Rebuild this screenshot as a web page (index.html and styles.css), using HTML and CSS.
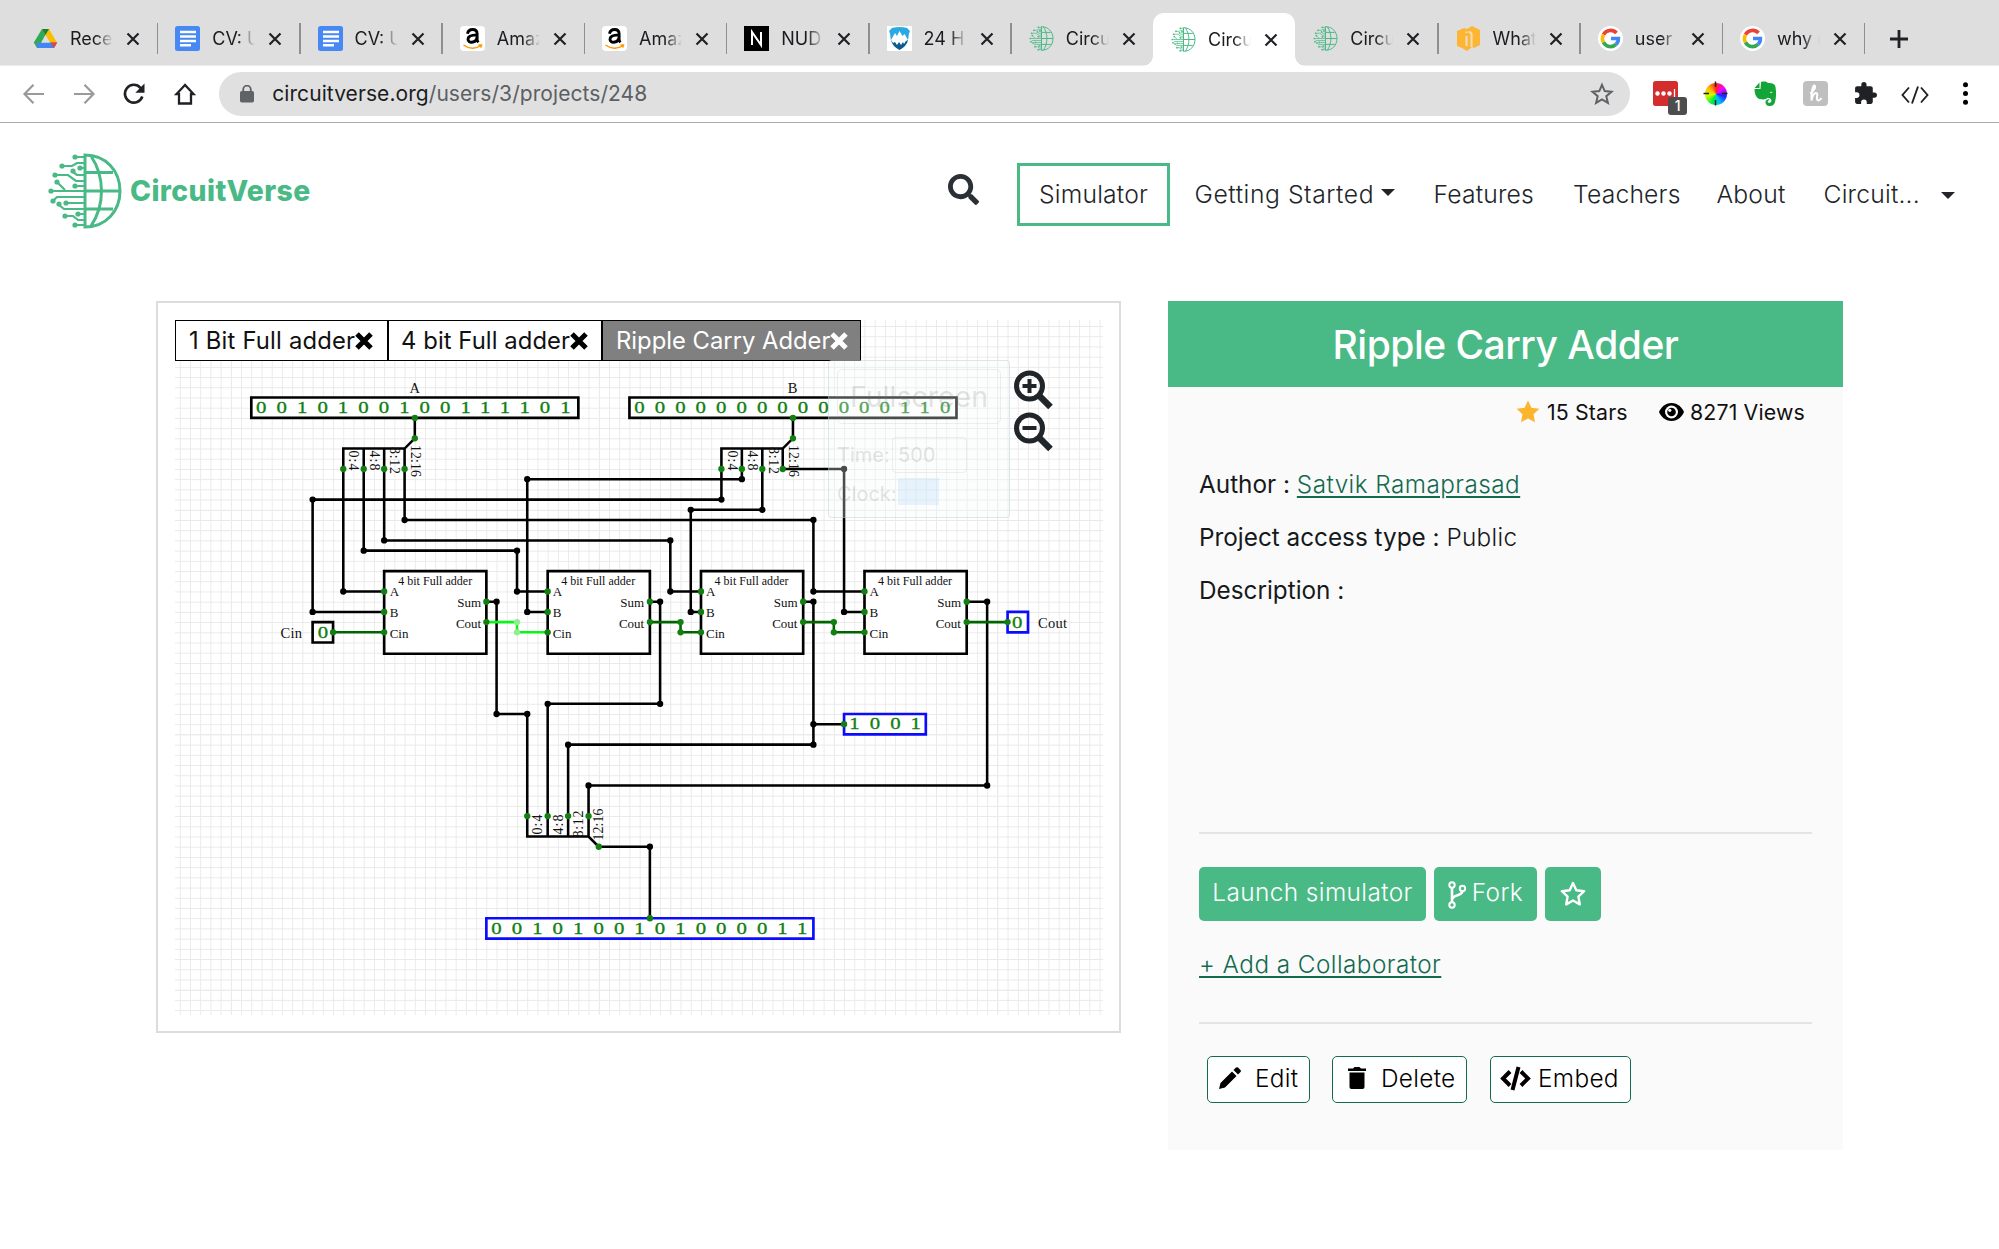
FILE: index.html
```html
<!DOCTYPE html>
<html lang="en">
<head>
<meta charset="utf-8">
<title>Ripple Carry Adder</title>
<link rel="stylesheet" href="styles.css">
</head>
<body>
<svg class="defs" width="0" height="0" aria-hidden="true">
  <defs>
    <symbol id="globe" viewBox="0 0 74 76">
      <g fill="none" stroke="#49b985" stroke-width="3">
        <path d="M37 2C58 2 72 18 72 38S58 74 37 74ZM43 3C57 24 57 52 43 73M38 19.500H65M37 38H72M38 56H65"/>
        <g stroke-width="2.200">
          <path d="M27 4H37M14 13H24L29 10H37M32 15H37M25 19 29 22H37M7 22H20L28 28H37M27 33H37M9 29 17 37M3 38H37M5 48 9 44H37M18 50H37M11 52 16 56H37M17 63H25L30 67H37M31 61H37M27 72H37"/>
        </g>
      </g>
      <g fill="#49b985"><circle cx="27" cy="4" r="2.600"/><circle cx="14" cy="13" r="2.600"/><circle cx="32" cy="15" r="2.600"/><circle cx="25" cy="18" r="2.600"/><circle cx="7" cy="22" r="2.600"/><circle cx="9" cy="29" r="2.600"/><circle cx="27" cy="33" r="2.600"/><circle cx="3" cy="38" r="2.600"/><circle cx="5" cy="48" r="2.600"/><circle cx="18" cy="50" r="2.600"/><circle cx="11" cy="51" r="2.600"/><circle cx="17" cy="63" r="2.600"/><circle cx="30" cy="61" r="2.600"/><circle cx="27" cy="72" r="2.600"/></g>
    </symbol>
    <symbol id="doc" viewBox="0 0 25 25"><rect width="25" height="25" rx="2.500" fill="#4688f4"/><path d="M5 6h16M5 10.500h16M5 15h16M5 19.300h11" stroke="#fff" stroke-width="2.400"/></symbol>
    <symbol id="amazon" viewBox="0 0 25 25"><rect width="25" height="25" rx="4" fill="#fff"/><path d="M7.500 7.800C8 4.800 10 3.500 12.600 3.500c3 0 4.500 1.600 4.500 4.300v5.400c0 1.500.4 2.200 1.300 3.200M17 8.900c-5.500.1-9 1-9 4.300 0 4.400 7.200 4.200 9-1" fill="none" stroke="#000" stroke-width="2.900"/><path d="M3.500 19c5.500 4 12 4.200 17.500.5M18.500 19h3l-.8 2.600" fill="none" stroke="#f90" stroke-width="1.500"/></symbol>
    <symbol id="google" viewBox="0 0 25 25"><circle cx="12.500" cy="12.500" r="12.500" fill="#fff"/><g fill="none" stroke-width="3.600"><path d="M18.500 7A8 8 0 0 0 5.500 8.600" stroke="#ea4335"/><path d="M5.500 8.600a8 8 0 0 0 0 7.800" stroke="#fbbc05"/><path d="M5.500 16.400a8 8 0 0 0 12.500 2" stroke="#34a853"/><path d="M13 12.500h7.400a8 8 0 0 1-2.400 5.900" stroke="#4285f4"/></g></symbol>
    <symbol id="x" viewBox="0 0 14 14"><path d="M1.500 1.500l11 11M12.500 1.500l-11 11" stroke="#202124" stroke-width="2.200"/></symbol>
  </defs>
</svg>

<div class="tabstrip">
  <div class="tab"><svg class="fav" viewBox="0 0 25 25"><path d="M9 3h7l-8.500 15L4 22 0.800 16.500z" fill="#31a853"/><path d="M9 3h7l8.200 14h-7z" fill="#fbbc04"/><path d="M4.500 16.500h19.700L21 22H4z" fill="#4285f4"/><path d="M17.500 16.500h6.700L21 22z" fill="#ea4335"/><path d="M12.500 9l4.200 7.500H8.300z" fill="#dedede"/><path d="M9 3h7l-3.500 6z" fill="#188038"/></svg><span class="tt">Rece</span><svg class="cx"><use href="#x"/></svg></div>
  <div class="tab"><svg class="fav"><use href="#doc"/></svg><span class="tt">CV: U</span><svg class="cx"><use href="#x"/></svg></div>
  <div class="tab"><svg class="fav"><use href="#doc"/></svg><span class="tt">CV: U</span><svg class="cx"><use href="#x"/></svg></div>
  <div class="tab"><svg class="fav"><use href="#amazon"/></svg><span class="tt">Amaz</span><svg class="cx"><use href="#x"/></svg></div>
  <div class="tab"><svg class="fav"><use href="#amazon"/></svg><span class="tt">Amaz</span><svg class="cx"><use href="#x"/></svg></div>
  <div class="tab"><svg class="fav" viewBox="0 0 25 25"><rect width="25" height="25"/><path d="M8 19V6l9 13V6" fill="none" stroke="#fff" stroke-width="2"/></svg><span class="tt">NUD</span><svg class="cx"><use href="#x"/></svg></div>
  <div class="tab"><svg class="fav" viewBox="0 0 25 25"><rect width="25" height="25" fill="#fff"/><path d="M5 2q7.500-2 15 0l3 3c-2 4-1 6-2 9H4c-1-3 0-5-2-9z" fill="#29aae2"/><path d="M4 14q1 6 8.500 10Q20 20 21 14z" fill="#0e5a92"/><path d="M4 14l4-7 2 3 2.500-5 3 5 2-2 3.500 6-2 1-2 3-1-2-2 3-2-3-2 3-2-3-2 1z" fill="#fff"/></svg><span class="tt">24 H</span><svg class="cx"><use href="#x"/></svg></div>
  <div class="tab nosep"><svg class="fav"><use href="#globe"/></svg><span class="tt">Circu</span><svg class="cx"><use href="#x"/></svg></div>
  <div class="tab active nosep"><svg class="fav"><use href="#globe"/></svg><span class="tt">Circu</span><svg class="cx"><use href="#x"/></svg></div>
  <div class="tab"><svg class="fav"><use href="#globe"/></svg><span class="tt">Circu</span><svg class="cx"><use href="#x"/></svg></div>
  <div class="tab"><svg class="fav" viewBox="0 0 25 25"><path d="M1 5l7-3 3 1 5-3 8 4v15l-6 3-2-1-5 4-5-3-5-2z" fill="#fdb633"/><path d="M10.500 10v10M15.500 21V8.500q0-2.500-3-2.500M10.500 5.500v1.500" fill="none" stroke="#f0dcb4" stroke-width="2.200"/></svg><span class="tt">What</span><svg class="cx"><use href="#x"/></svg></div>
  <div class="tab"><svg class="fav"><use href="#google"/></svg><span class="tt">user</span><svg class="cx"><use href="#x"/></svg></div>
  <div class="tab"><svg class="fav"><use href="#google"/></svg><span class="tt">why r</span><svg class="cx"><use href="#x"/></svg></div>
  <svg class="plus" viewBox="0 0 20 20"><path d="M10 1v18M1 10h18" stroke="#202124" stroke-width="2.800"/></svg>
</div>

<div class="toolbar">
  <svg class="tb back" viewBox="0 0 24 24"><path d="M22 12H3M11.500 2.800L2.500 12l9 9.200" fill="none" stroke="#9a9a9a" stroke-width="2.200"/></svg>
  <svg class="tb" viewBox="0 0 24 24"><path d="M2 12h19M12.500 2.800l9 9.200-9 9.200" fill="none" stroke="#9a9a9a" stroke-width="2.200"/></svg>
  <svg class="tb" viewBox="0 0 24 24"><path d="M20.300 14.500A8.900 8.900 0 1 1 18.500 5.800L20 7.500" fill="none" stroke="#202124" stroke-width="2.600"/><path d="M22.500 1.500v9.200h-9.200z" fill="#202124"/></svg>
  <svg class="tb" viewBox="0 0 24 24"><path d="M12 3L3.500 12H6v9.500h12V12h2.500z" fill="none" stroke="#202124" stroke-width="2.300"/></svg>
  <div class="omnibox">
    <svg class="lock" viewBox="0 0 14 18"><rect y="6" width="14" height="11.500" rx="1.800" fill="#5f6368"/><path d="M3.200 7V4.500a3.800 3.800 0 0 1 7.600 0V7" fill="none" stroke="#5f6368" stroke-width="1.800"/></svg>
    <span class="url">circuitverse.org<span class="path">/users/3/projects/248</span></span>
    <svg class="bstar" viewBox="0 0 24 24"><path d="M12 2.800l2.700 6.300 6.800.6-5.200 4.500 1.600 6.700-5.900-3.600-5.900 3.600 1.600-6.700L2.500 9.700l6.800-.6z" fill="none" stroke="#5f6368" stroke-width="2"/></svg>
  </div>
  <div class="exts">
    <span class="ext red"><svg viewBox="0 0 25 25"><rect width="25" height="25" rx="2.500" fill="#d32d2e"/><circle cx="4.500" cy="12.500" r="2.200" fill="#fff"/><circle cx="10.500" cy="12.500" r="2.200" fill="#fff"/><circle cx="16.500" cy="12.500" r="2.200" fill="#fff"/><path d="M21.500 8v8" stroke="#fff" stroke-width="1.300"/></svg><b class="badge">1</b></span>
    <span class="ext"><i class="wheel"></i><svg class="cross" viewBox="0 0 25 25"><path d="M12.500 .5v5.500M12.500 19v5.500M.5 12.500H6M19 12.500h5.500" stroke="#222" stroke-width="1.500"/></svg></span>
    <span class="ext"><svg viewBox="0 0 25 25"><path d="M8 1c4-1 6 0 7 1 5 0 7 1 7.500 4 1 6 .7 11-.5 15-1 3.500-3 4-5.500 4-3 0-4-2-4-4s2-3 4-2.600c-.5 1.500-1.700.6-1.800 2.400 0 1.500 3.700 1.500 3.700-1 0-2-2-3-4-3-1 2-5 2-8 1.200C3 17 1.500 12 1.500 8H7.500z" fill="#14a538"/><path d="M1.500 7L6.500 1.500V7z" fill="#14a538"/><path d="M16.500 11.500q2-1.500 3 .5z" fill="#fff"/></svg></span>
    <span class="ext"><svg viewBox="0 0 25 25"><rect width="25" height="25" rx="4" fill="#bfbfbf"/><path d="M7 12c5-2 6-7 4.500-7.500S8 11 8.500 19.500c1-5 3-7.500 4.500-7.500 2.500 0 .5 3.500 1 6s3 1.500 4.500-1" fill="none" stroke="#fff" stroke-width="2"/></svg></span>
    <span class="ext"><svg viewBox="0 0 24 24"><path d="M20.500 11H19V7c0-1.100-.9-2-2-2h-4V3.500a2.500 2.500 0 0 0-5 0V5H4c-1.100 0-2 .9-2 2v3.800h1.500a2.700 2.700 0 0 1 0 5.400H2V20c0 1.100.9 2 2 2h3.800v-1.500a2.700 2.700 0 0 1 5.400 0V22H17c1.100 0 2-.9 2-2v-4h1.500a2.500 2.500 0 0 0 0-5z" fill="#202124"/></svg></span>
    <span class="ext"><svg class="code" viewBox="0 0 28 20"><path d="M8 2.500L1.500 10 8 17.500M20 2.500l6.500 7.500L20 17.500M17 1.500l-6 17" fill="none" stroke="#202124" stroke-width="1.900"/></svg></span>
    <span class="ext"><svg viewBox="0 0 24 24"><circle cx="12" cy="3.500" r="2.400"/><circle cx="12" cy="12" r="2.400"/><circle cx="12" cy="20.500" r="2.400"/></svg></span>
  </div>
</div>

<header class="header">
  <div class="logo"><svg class="mark"><use href="#globe"/></svg><span class="brand">CircuitVerse</span></div>
  <svg class="search" viewBox="0 0 512 512"><path fill="#2b3037" d="M505 442.700L405.300 343c-4.500-4.500-10.600-7-17-7H372c27.600-35.300 44-79.700 44-128C416 93.100 322.900 0 208 0S0 93.100 0 208s93.100 208 208 208c48.300 0 92.700-16.400 128-44v16.300c0 6.400 2.500 12.500 7 17l99.700 99.700c9.400 9.400 24.600 9.400 33.900 0l28.300-28.300c9.400-9.400 9.400-24.600.1-34zM208 336c-70.700 0-128-57.200-128-128 0-70.700 57.200-128 128-128 70.700 0 128 57.200 128 128 0 70.700-57.200 128-128 128z"/></svg>
  <nav class="nav">
    <a class="sim">Simulator</a>
    <a class="started">Getting Started<i class="caret"></i></a>
    <a class="features">Features</a>
    <a class="teachers">Teachers</a>
    <a class="about">About</a>
    <a class="user">Circuit...<i class="caret low"></i></a>
  </nav>
</header>

<main class="main">
  <section class="viewer">
    <svg class="canvas" viewBox="175 320 928 695">
      <defs>
        <pattern id="minor" x="251.300" y="397.500" width="10.220" height="10.210" patternUnits="userSpaceOnUse"><path d="M0 0H10.220M0 0V10.210" stroke="#e9e9e9" stroke-width="1.700"/></pattern>
      </defs>
      <rect x="175" y="320" width="928" height="695" fill="url(#minor)"/>
      <path d="M231.500 320V1014M466.500 320V1014M599.500 320V1014M670.500 320V1014M834.500 320V1014M997.500 320V1014M175 510.500H1103M175 530.500H1103M175 734.500H1103M175 857.500H1103M175 990.500H1103" stroke="#ebebeb" fill="none"/>

      <g transform="translate(251.300 397.500) scale(10.220 10.210)" fill="none" stroke="#000" stroke-width=".25">
        <g fill="#fff" stroke-width=".26">
          <path d="M0 0H32V2H0ZM37 0H69V2H37ZM6 22H8V24H6Z"/>
          <path d="M74 21H76V23H74ZM58 31H66V33H58ZM23 51H55V53H23Z" stroke="#0b0bff"/>
          <path d="M13 17H23V25.100H13ZM29 17H39V25.100H29ZM44 17H54V25.100H44ZM60 17H70V25.100H60Z"/>
        </g>
        <path d="M16 2V4L15 5H9V7M11 5V7M13 5V7M15 5V7M53 2V4L52 5H46V7M48 5V7M50 5V7M52 5V7M27 41V43H33L34 44M29 41V43M31 41V43M33 41V43"/>
        <path d="M9 7V19H13M11 7V15H26V19H29M13 7V14H41V19H44M15 7V12H55V19H60M46 7V10H6V21H13M48 7V8H27V21H29M50 7V11H43V21H44M52 7H58V21H60"/>
        <path d="M23 20H24V31H27V41M39 20H40V30H29V41M54 20H55V34H31V41M55 32H58M70 20H72V38H33V41M34 44H39V51"/>
        <path d="M8 23H13M39 22H42V23H44M54 22H57V23H60M70 22H74" stroke="#006400"/>
        <path d="M23 22H26V23H29" stroke="#0bf51a"/>
        <g stroke-linecap="round" stroke-width=".62">
          <path d="M9 19h0M11 15h0M26 15h0M26 19h0M13 14h0M41 14h0M41 19h0M15 12h0M55 12h0M55 19h0M46 10h0M6 10h0M6 21h0M48 8h0M27 8h0M27 21h0M50 11h0M43 11h0M43 21h0M58 7h0M58 21h0M24 20h0M24 31h0M27 31h0M40 20h0M40 30h0M29 30h0M55 20h0M55 34h0M31 34h0M55 32h0M72 20h0M72 38h0M33 38h0M39 44h0"/>
          <path d="M26 22h0M26 23h0" stroke="#90ee90"/>
          <path stroke="#118011" d="M16 2h0M16 4h0M53 2h0M53 4h0M9 7h0M11 7h0M13 7h0M15 7h0M46 7h0M48 7h0M50 7h0M52 7h0M13 19h0M13 21h0M13 23h0M8 23h0M23 20h0M23 22h0M29 19h0M29 21h0M29 23h0M39 20h0M39 22h0M42 22h0M42 23h0M44 19h0M44 21h0M44 23h0M54 20h0M54 22h0M57 22h0M57 23h0M60 19h0M60 21h0M60 23h0M70 20h0M70 22h0M74 22h0M27 41h0M29 41h0M31 41h0M33 41h0M34 44h0M39 51h0M58 32h0"/>
        </g>
      </g>

      <g class="bits">
        <text transform="translate(261.300 413) scale(1.300 1)" x="-4">0010100100111101</text>
        <text transform="translate(639.500 413) scale(1.300 1)" x="-4">0000000000000110</text>
        <text transform="translate(496.500 933.500) scale(1.300 1)" x="-4">0010100101000011</text>
        <text transform="translate(854.500 729) scale(1.300 1)" x="-4">1001</text>
        <text transform="translate(323 637.700) scale(1.300 1)" x="-4">0</text>
        <text transform="translate(1017.300 627.500) scale(1.300 1)" x="-4">0</text>
      </g>

      <g class="lbl big">
        <text x="414.800" y="392.700" text-anchor="middle">A</text>
        <text x="792.700" y="392.700" text-anchor="middle">B</text>
        <text x="280.500" y="638" textLength="21.500">Cin</text>
        <text x="1038" y="628" textLength="29">Cout</text>
      </g>
      <g class="lbl" transform="translate(384.200 571)"><text class="cap" x="51" y="14" text-anchor="middle" textLength="74">4 bit Full adder</text><text x="5.500" y="25">A</text><text x="5.500" y="46.300">B</text><text x="5.500" y="66.700">Cin</text><text x="97" y="36" text-anchor="end">Sum</text><text x="97" y="56.500" text-anchor="end">Cout</text></g>
      <g class="lbl" transform="translate(547.200 571)"><text class="cap" x="51" y="14" text-anchor="middle" textLength="74">4 bit Full adder</text><text x="5.500" y="25">A</text><text x="5.500" y="46.300">B</text><text x="5.500" y="66.700">Cin</text><text x="97" y="36" text-anchor="end">Sum</text><text x="97" y="56.500" text-anchor="end">Cout</text></g>
      <g class="lbl" transform="translate(700.500 571)"><text class="cap" x="51" y="14" text-anchor="middle" textLength="74">4 bit Full adder</text><text x="5.500" y="25">A</text><text x="5.500" y="46.300">B</text><text x="5.500" y="66.700">Cin</text><text x="97" y="36" text-anchor="end">Sum</text><text x="97" y="56.500" text-anchor="end">Cout</text></g>
      <g class="lbl" transform="translate(864 571)"><text class="cap" x="51" y="14" text-anchor="middle" textLength="74">4 bit Full adder</text><text x="5.500" y="25">A</text><text x="5.500" y="46.300">B</text><text x="5.500" y="66.700">Cin</text><text x="97" y="36" text-anchor="end">Sum</text><text x="97" y="56.500" text-anchor="end">Cout</text></g>

      <g class="lbl split">
        <text transform="translate(349 450.500) rotate(90)" textLength="20">0:4</text>
        <text transform="translate(370 450.500) rotate(90)" textLength="20">4:8</text>
        <text transform="translate(390 447) rotate(90)" textLength="27">8:12</text>
        <text transform="translate(410.500 445) rotate(90)" textLength="32">12:16</text>
        <text transform="translate(727.500 450.500) rotate(90)" textLength="20">0:4</text>
        <text transform="translate(748 450.500) rotate(90)" textLength="20">4:8</text>
        <text transform="translate(768.500 447) rotate(90)" textLength="27">8:12</text>
        <text transform="translate(788.500 445) rotate(90)" textLength="32">12:16</text>
        <text transform="translate(542 834.500) rotate(-90)" textLength="20">0:4</text>
        <text transform="translate(562.500 834.500) rotate(-90)" textLength="20">4:8</text>
        <text transform="translate(582.500 837.500) rotate(-90)" textLength="27">8:12</text>
        <text transform="translate(603 840.500) rotate(-90)" textLength="32">12:16</text>
      </g>

      <g fill="none" stroke="#20252a">
        <g stroke-width="5"><circle cx="1029.500" cy="386" r="13"/><circle cx="1029.500" cy="428" r="13"/></g>
        <path d="M1039.500 396l11 11M1039.500 438l11 11" stroke-width="6.500"/>
        <path d="M1022.500 386h14M1029.500 379v14M1022.500 428h14" stroke-width="4"/>
      </g>
    </svg>

    <div class="circuit-tabs">
      <div class="ctab one">1 Bit Full adder<svg viewBox="0 0 18 18"><path d="M2 2l14 14M16 2L2 16" stroke="#000" stroke-width="5"/></svg></div>
      <div class="ctab two">4 bit Full adder<svg viewBox="0 0 18 18"><path d="M2 2l14 14M16 2L2 16" stroke="#000" stroke-width="5"/></svg></div>
      <div class="ctab three">Ripple Carry Adder<svg viewBox="0 0 18 18"><path d="M2 2l14 14M16 2L2 16" stroke="#fff" stroke-width="5"/></svg></div>
    </div>

    <div class="clockpanel">
      <div class="fs">Fullscreen</div>
      <div class="row time"><span>Time:</span><span class="field">500</span></div>
      <div class="row clock"><span>Clock:</span><span class="switch"></span></div>
    </div>
  </section>

  <aside class="panel">
    <h1 class="title">Ripple Carry Adder</h1>
    <div class="stats">
      <svg class="sstar" viewBox="0 0 24 23"><path d="M12 .5l3.400 7.300 8 1-5.900 5.500 1.500 8L12 18.400 5 22.300l1.500-8L.6 8.800l8-1z" fill="#fdb52e"/></svg><span class="stars">15 Stars</span>
      <svg class="eye" viewBox="0 0 25 18"><path d="M12.500 0C19 0 23 4.500 25 9c-2 4.500-6 9-12.500 9S2 13.500 0 9C2 4.500 6 0 12.500 0z"/><circle cx="12.500" cy="9" r="6.500" fill="#fafafa"/><circle cx="12.500" cy="9" r="4.300"/><circle cx="10.800" cy="7.300" r="1.600" fill="#fafafa"/></svg><span class="views">8271 Views</span>
    </div>
    <div class="info">
      <p>Author : <a class="link">Satvik Ramaprasad</a></p>
      <p>Project access type : <span class="thin">Public</span></p>
      <p>Description :</p>
    </div>
    <hr>
    <div class="actions">
      <a class="btn launch">Launch simulator</a>
      <a class="btn fork"><svg viewBox="0 0 18 28"><g fill="none" stroke="#fff" stroke-width="2"><circle cx="4" cy="4" r="2.700"/><circle cx="14.500" cy="7.500" r="2.700"/><circle cx="4" cy="24" r="2.700"/><path d="M4 6.700v14.600M14.500 10.200c-.5 5-9.500 3-10.300 8" stroke-width="2.600"/></g></svg>Fork</a>
      <a class="btn star"><svg viewBox="0 0 26 25"><path d="M13 2l3.300 7.200 7.800 1-5.700 5.400 1.400 7.800-6.800-3.900-6.800 3.900 1.400-7.800L1.900 10.200l7.800-1z" fill="none" stroke="#fff" stroke-width="2.400" stroke-linejoin="round"/></svg></a>
    </div>
    <a class="link collab">+ Add a Collaborator</a>
    <hr>
    <div class="tools">
      <a class="tool edit"><svg viewBox="0 0 22 22"><path d="M0 22l1.500-6L13 4.500 17.500 9 6 20.500zM14.500 3L17 .6q1-.8 2 0L21.500 3q.8 1 0 2L19 7.500z"/></svg>Edit</a>
      <a class="tool delete"><svg viewBox="0 0 18 22"><path d="M0 1.500h5L6.500 0h5L13 1.500h5V4H0zM1.500 5.500h15V20q0 2-2 2h-11q-2 0-2-2z"/></svg>Delete</a>
      <a class="tool embed"><svg viewBox="0 0 31 25"><path d="M10 5.500L3 12.500l7 7M21 5.500l7 7-7 7M18.500 1l-6 23" fill="none" stroke="#000" stroke-width="4"/></svg>Embed</a>
    </div>
  </aside>
</main>
</body>
</html>
```
FILE: styles.css
```css
* { box-sizing: border-box; }
body {
  margin: 0;
  width: 1999px;
  height: 1249px;
  overflow: hidden;
  background: #fff;
  color: #212529;
  font-family: Inter, "Liberation Sans", sans-serif;
}
svg { display: block; flex: none; }
.defs { position: absolute; }

/* Browser tabs */
.tabstrip {
  display: flex;
  align-items: flex-end;
  height: 66px;
  padding-left: 15px;
  background: #dedede;
  border-bottom: 1px solid #ececec;
}
.tab {
  position: relative;
  display: flex;
  align-items: center;
  width: 142.250px;
  height: 53px;
  padding-left: 18px;
  flex: none;
  color: #1b1c1f;
}
.tab::after {
  content: "";
  position: absolute;
  right: -1px;
  top: 11px;
  width: 1.500px;
  height: 31px;
  background: #8f8f8f;
}
.tab.nosep::after { display: none; }
.tab.active {
  background: #fff;
  border-radius: 11px 11px 0 0;
  margin-bottom: -1px;
}
.tab.active::before {
  content: "";
  position: absolute;
  left: -10px;
  right: -10px;
  bottom: 0;
  height: 10px;
  background:
    radial-gradient(circle at 0 0, transparent 9.500px, #fff 10px) left / 10px 10px no-repeat,
    radial-gradient(circle at 100% 0, transparent 9.500px, #fff 10px) right / 10px 10px no-repeat;
}
.fav { width: 25px; height: 25px; }
.tt {
  width: 43px;
  margin-left: 12px;
  overflow: hidden;
  white-space: nowrap;
  font-size: 18px;
  line-height: 25px;
  -webkit-mask-image: linear-gradient(90deg, #000 60%, transparent);
  mask-image: linear-gradient(90deg, #000 60%, transparent);
}
.cx { width: 14px; height: 14px; margin-left: 13px; }
.plus { width: 20px; height: 20px; margin: 0 0 16px 25px; }

/* Address bar */
.toolbar {
  display: flex;
  align-items: center;
  height: 57px;
  padding: 0 21px 1px 22px;
  border-bottom: 1.500px solid #adadad;
}
.tb { width: 24px; height: 24px; margin-right: 26.200px; }
.omnibox {
  display: flex;
  align-items: center;
  width: 1411px;
  height: 44px;
  margin-left: -3.500px;
  padding: 0 16px 0 21px;
  border-radius: 22px;
  background: #e0e0e0;
}
.lock { width: 14px; height: 18px; }
.url { margin-left: 18px; font-size: 21px; color: #1b1c1f; letter-spacing: .070px; }
.path { color: #5c5f63; }
.bstar { width: 24px; height: 24px; margin-left: auto; }
.exts { display: flex; justify-content: space-between; width: 325px; margin-left: 23px; }
.ext { position: relative; width: 25px; height: 25px; display: flex; align-items: center; justify-content: center; }
.ext svg { width: 25px; height: 25px; }
.ext .code { width: 28px; height: 20px; margin-top: 3px; }
.ext .cross { position: absolute; left: 0; top: 0; }
.badge {
  position: absolute;
  left: 15px;
  top: 16px;
  width: 19px;
  height: 18px;
  border-radius: 3px;
  background: #4d4d4d;
  color: #fff;
  font-size: 14px;
  font-weight: 500;
  line-height: 18px;
  text-align: center;
}
.wheel {
  width: 22px;
  height: 22px;
  border-radius: 50%;
  background: conic-gradient(#f22, #f0f, #22f, #0bf, #0e4, #cf0, #fb0, #f22);
}

/* Site header */
.header { display: flex; align-items: center; height: 142px; padding-left: 48px; margin-bottom: 1px; }
.logo { display: flex; align-items: center; width: 899.500px; height: 76px; margin-top: -6px; }
.mark { width: 74px; height: 76px; }
.brand { margin-left: 8px; font-size: 28.300px; font-weight: 800; color: #49b985; letter-spacing: .400px; }
.search { width: 31px; height: 31px; margin-top: -9px; }
.nav { display: flex; align-items: center; margin-left: 38.500px; font-size: 24.700px; font-weight: 300; letter-spacing: .180px; white-space: nowrap; }
.nav a { display: flex; align-items: center; }
.nav .sim { width: 153px; height: 63px; border: 3px solid #49b985; justify-content: center; margin-right: 24.500px; }
.nav .started { width: 239px; letter-spacing: .560px; }
.features { width: 139.500px; }
.teachers { width: 143.500px; }
.about { width: 107px; }
.user { width: 131px; justify-content: space-between; }
.caret { border: 7.500px solid transparent; border-top-color: #212529; border-bottom: 0; margin: -4px 0 0 7px; }
.caret.low { margin-top: 3px; }

/* Content */
.main { display: flex; align-items: flex-start; padding: 35px 0 0 156px; }
.viewer {
  position: relative;
  width: 965px;
  height: 732px;
  padding: 17px;
  border: 2px solid #dcdcdc;
}
.canvas { width: 928px; height: 695px; overflow: visible; }
.bits { font: 16px "Liberation Serif", serif; fill: #118011; stroke: #118011; stroke-width: .3; letter-spacing: 7.720px; }
.lbl { font: 13px "Liberation Serif", serif; fill: #111; }
.lbl.big { font-size: 14.500px; }
.lbl .cap { font-size: 12px; }
.lbl.split { font-size: 14px; }

.circuit-tabs { position: absolute; left: 17px; top: 17px; display: flex; }
.ctab {
  display: flex;
  align-items: center;
  height: 41px;
  padding-left: 13px;
  border: 1.500px solid #000;
  background: #fff;
  color: #111;
  font-size: 23.800px;
  white-space: nowrap;
}
.ctab svg { width: 18px; height: 18px; }
.ctab.one { width: 213px; letter-spacing: .200px; }
.ctab.two { width: 214px; padding-left: 12px; letter-spacing: .080px; }
.ctab.three { width: 259px; background: #808080; color: #fff; }

.clockpanel {
  position: absolute;
  left: 670px;
  top: 57px;
  width: 182px;
  height: 158px;
  padding: 8px;
  border: 1px solid rgba(170, 200, 208, .4);
  border-radius: 4px;
  background: rgba(245, 248, 248, .3);
  color: rgba(110, 110, 110, .2);
  font-size: 20px;
}
.fs {
  height: 55px;
  border: 1px solid rgba(150, 150, 150, .15);
  border-radius: 5px;
  font-size: 28.500px;
  line-height: 54px;
  text-align: center;
}
.row { display: flex; align-items: center; }
.time { height: 36px; margin-top: 13px; }
.row > span:first-child { width: 55px; }
.field { width: 75px; height: 36px; padding-left: 5px; line-height: 34px; border: 1px solid rgba(150, 150, 150, .15); border-radius: 4px; }
.clock { height: 27px; margin-top: 5px; }
.clock > span:first-child { padding-top: 4px; }
.switch { width: 41px; height: 27px; margin-left: 6px; background: rgba(190, 222, 250, .35); }

/* Project details */
.panel { width: 675px; height: 849px; margin-left: 47px; background: #fafafa; }
.title {
  height: 86px;
  margin: 0;
  background: #49b985;
  color: #fff;
  font-size: 39px;
  font-weight: 450;
  letter-spacing: -.500px;
  line-height: 88px;
  text-align: center;
}
.stats { display: flex; align-items: center; height: 50px; padding-left: 348px; color: #111; font-size: 21.300px; white-space: nowrap; }
.sstar { width: 24px; height: 23px; margin-top: -1px; }
.stars { width: 112px; margin-left: 7px; letter-spacing: .150px; }
.eye { width: 25px; height: 18px; }
.views { margin-left: 6px; letter-spacing: .150px; }
.info { height: 395px; padding: 27px 31px 0; font-size: 24.300px; color: #16191c; }
.info p { margin: 0; line-height: 40px; height: 53px; }
.link { color: #126a51; font-weight: 300; letter-spacing: .450px; text-decoration: underline; text-decoration-thickness: 1.500px; text-underline-offset: 3px; }
.thin { font-weight: 300; letter-spacing: .300px; }
hr { height: 2px; margin: 0 31px; border: 0; background: #e4e4e4; }
.actions { display: flex; gap: 8px; margin: 33px 31px 0; }
.btn {
  display: flex;
  align-items: center;
  justify-content: center;
  height: 54px;
  padding-bottom: 4px;
  border-radius: 5px;
  background: #49b985;
  color: #fff;
  font-size: 24.400px;
  font-weight: 300;
  letter-spacing: .400px;
}
.launch { width: 227px; }
.fork { width: 103px; gap: 6px; }
.fork svg { width: 18px; height: 28px; margin-top: 5px; }
.star { width: 56px; }
.star svg { width: 26px; height: 25px; margin-top: 2px; }
.collab { display: block; margin: 23px 31px 38px; height: 40px; font-size: 24.300px; line-height: 40px; }
.tools { display: flex; margin: 32px 39px 0; }
.tool {
  display: flex;
  align-items: center;
  height: 47px;
  padding-bottom: 3px;
  border: 1.500px solid #126a51;
  border-radius: 5px;
  background: #fff;
  color: #000;
  font-size: 24.400px;
  font-weight: 300;
  letter-spacing: .300px;
}
.edit { width: 103px; margin-right: 22px; padding-left: 11px; gap: 14px; }
.edit svg { width: 22px; height: 22px; }
.delete { width: 135px; margin-right: 23px; padding-left: 15px; gap: 15px; }
.delete svg { width: 18px; height: 22px; }
.embed { width: 141px; padding-left: 9px; gap: 7px; }
.embed svg { width: 31px; height: 25px; }
```
